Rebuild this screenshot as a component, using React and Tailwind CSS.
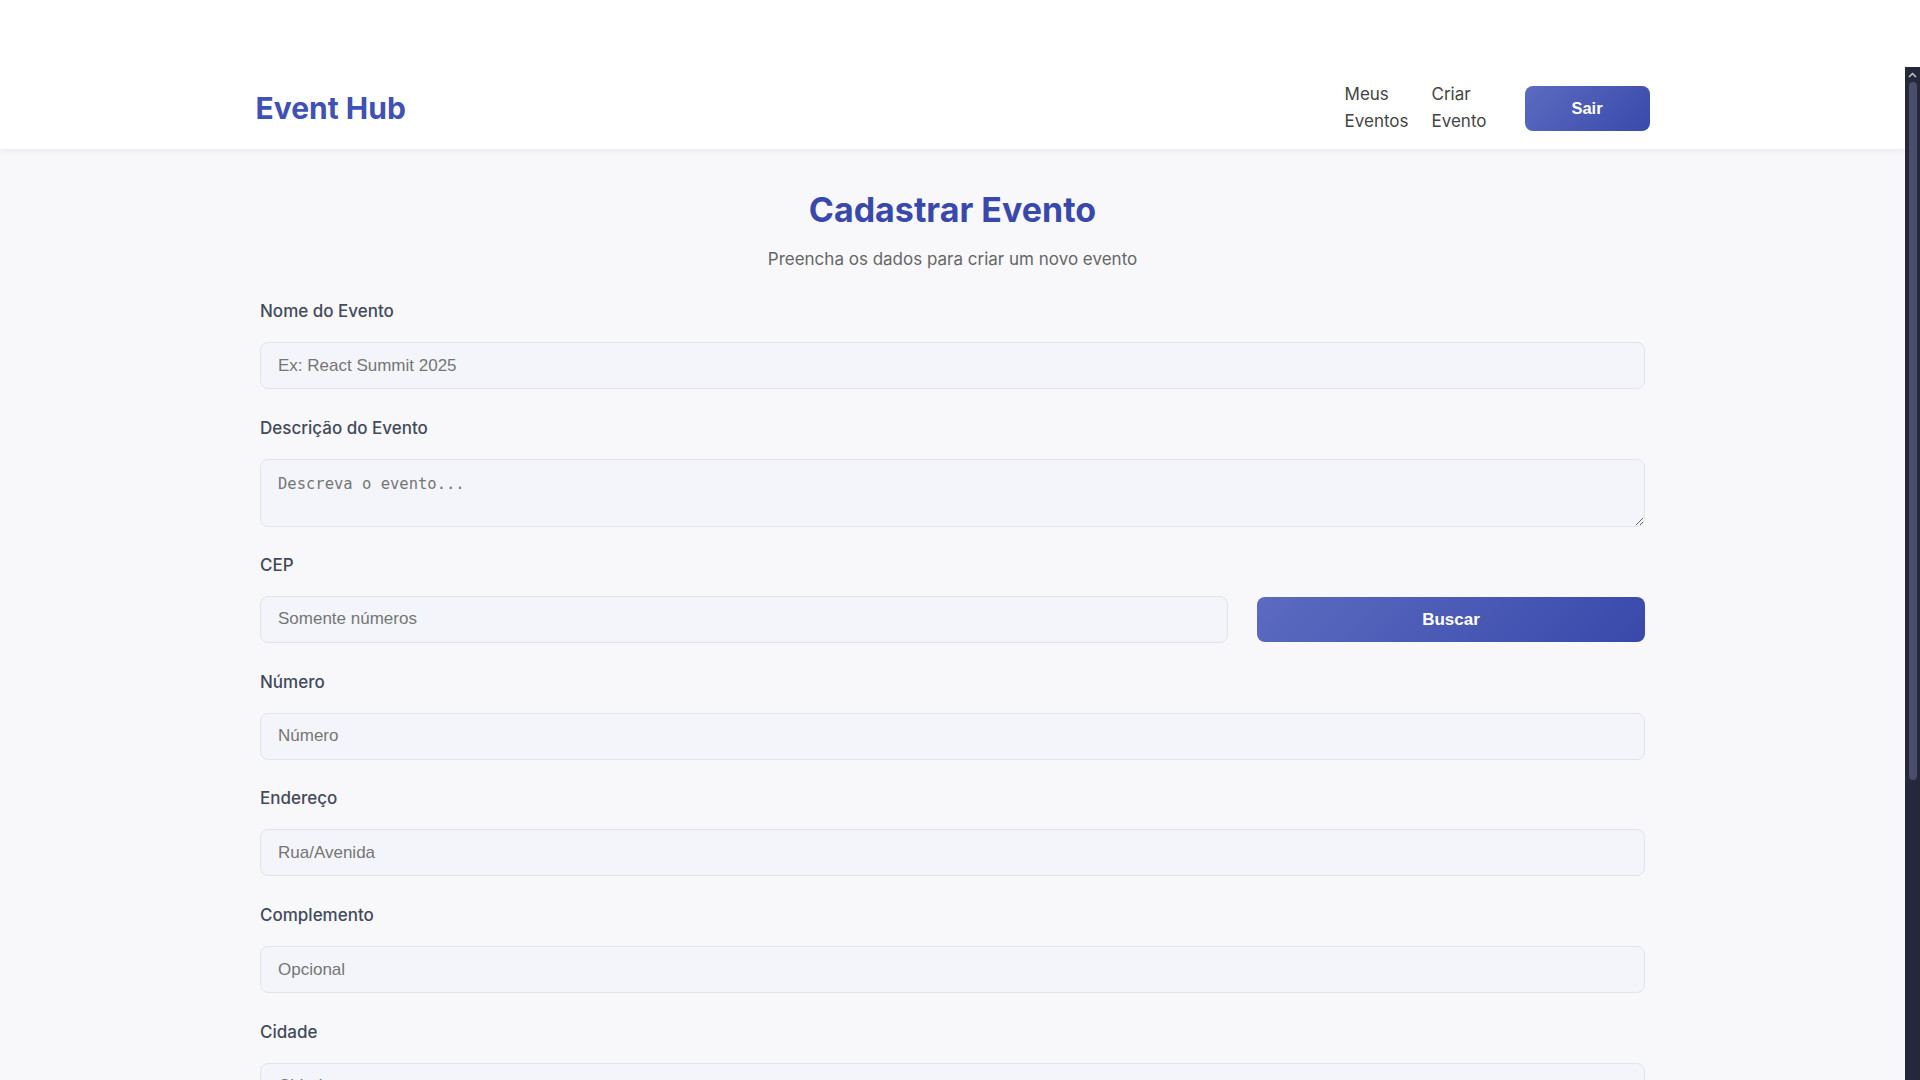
import React from "react";

const inputCls =
  "block w-full h-[47px] rounded-[8px] border border-[#e0e4ee] bg-[#f4f5fa] px-[17px] text-[17px] text-[#333] font-['Liberation_Sans',Arial,sans-serif] placeholder:text-[#757575] outline-none";

const btnGrad =
  "bg-[linear-gradient(135deg,#5c6bc0,#3949ab)] text-white font-bold font-['Liberation_Sans',Arial,sans-serif] rounded-[8px]";

const labelCls = "block text-[17px] leading-6 font-medium text-[#424a5a] mb-[19px]";

function Field({ label, placeholder, type = "text" }) {
  return (
    <div className="mb-[26.8px]">
      <label className={labelCls}>{label}</label>
      <input type={type} placeholder={placeholder} className={inputCls} />
    </div>
  );
}

export default function App() {
  return (
    <div className="h-screen flex flex-col bg-white font-['Inter',sans-serif]">
      <div className="h-[67px] shrink-0 bg-white" />
      <div className="flex-1 min-h-0 flex">
        <div className="flex-1 min-w-0 overflow-hidden bg-[#f8f8fb]">
          <header className="relative bg-white shadow-[0_2px_6px_rgba(0,0,0,0.06)]">
            <div className="mx-auto w-[1394px] h-[82px] flex items-center justify-between">
              <div className="text-[30px] font-bold leading-none text-[#3f51b5] -mt-[1px]">Event Hub</div>
              <nav className="flex items-center">
                <a className="w-min text-[17px] leading-[27px] text-[#444] -ml-[2px]">Meus Eventos</a>
                <a className="ml-[23px] w-min text-[17px] leading-[27px] text-[#444]">Criar Evento</a>
                <button className={"ml-[38px] w-[125px] h-[45px] text-[16.5px] " + btnGrad}>Sair</button>
              </nav>
            </div>
          </header>
          <main className="mx-auto w-[1385px] pt-[39px] pb-[60px]">
            <h1 className="text-center text-[34px] leading-[44px] font-bold text-[#3949ab]">
              Cadastrar Evento
            </h1>
            <p className="mt-[14px] text-center text-[17px] leading-[26px] text-[#666]">
              Preencha os dados para criar um novo evento
            </p>
            <form className="mt-[27px]">
              <Field label="Nome do Evento" placeholder="Ex: React Summit 2025" />
              <div className="mb-[26px]">
                <label className={labelCls}>Descrição do Evento</label>
                <textarea
                  placeholder="Descreva o evento..."
                  className="block w-full h-[68px] rounded-[8px] border border-[#e0e4ee] bg-[#f4f5fa] px-[17px] pt-[13px] pb-[12px] text-[15.5px] leading-normal font-['DejaVu_Sans_Mono',monospace] placeholder:text-[#757575] outline-none"
                />
              </div>
              <div className="mb-[26.8px]">
                <label className={labelCls}>CEP</label>
                <div className="flex items-center gap-[29px]">
                  <input placeholder="Somente números" className={inputCls + " flex-1 min-w-0"} />
                  <button type="button" className={"w-[388px] h-[45px] shrink-0 text-[17px] " + btnGrad}>
                    Buscar
                  </button>
                </div>
              </div>
              <Field label="Número" placeholder="Número" />
              <Field label="Endereço" placeholder="Rua/Avenida" />
              <Field label="Complemento" placeholder="Opcional" />
              <Field label="Cidade" placeholder="Cidade" />
              <Field label="Estado" placeholder="UF" />
              <Field label="Data do Evento" placeholder="dd/mm/aaaa" />
              <button type="button" className={"mt-[8px] w-full h-[50px] text-[17px] " + btnGrad}>
                Cadastrar Evento
              </button>
            </form>
          </main>
        </div>
        <div className="w-[15px] shrink-0 bg-[#25273a] flex flex-col items-center">
          <div className="h-[15px] flex items-center justify-center">
            <svg width="9" height="6" viewBox="0 0 9 6">
              <path d="M1 5 L4.5 1.5 L8 5" fill="none" stroke="#c4c6d0" strokeWidth="1.5" />
            </svg>
          </div>
          <div className="w-[8px] h-[698px] rounded-full bg-[#4b4e6b]" />
        </div>
      </div>
    </div>
  );
}
